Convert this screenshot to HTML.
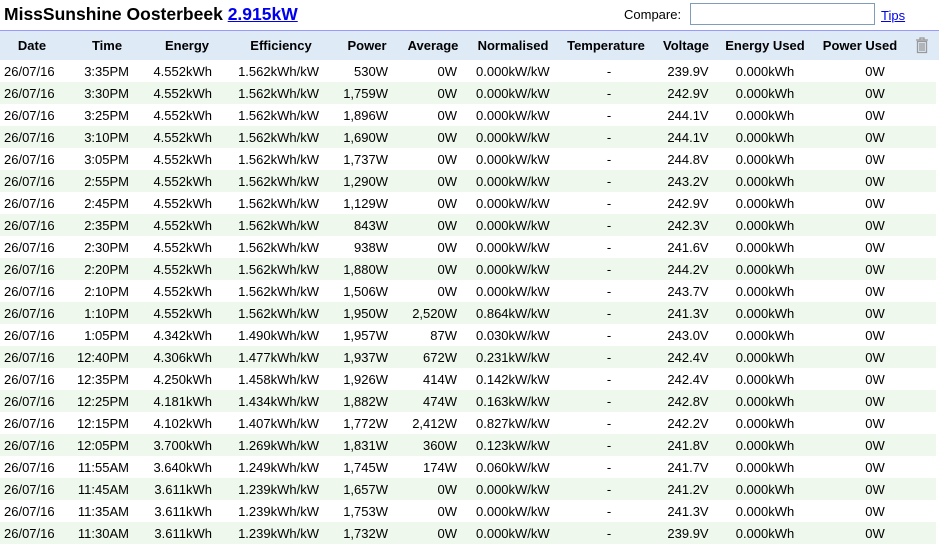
<!DOCTYPE html>
<html><head><meta charset="utf-8"><style>
body{margin:0;width:939px;height:540px;overflow:hidden;background:#fff;font-family:"Liberation Sans",Arial,sans-serif;font-size:13px;color:#000;position:relative}
.t{position:absolute;left:4px;top:4px;font-size:17.5px;font-weight:bold}
.t a{color:#00e;text-decoration:underline}
.cmp{position:absolute;left:624px;top:7px;font-size:13px}
.in{position:absolute;left:690px;top:3px;width:185px;height:22px;border:1px solid #7f9db9;box-sizing:border-box}
.tips{position:absolute;left:881px;top:8px;color:#00e;text-decoration:underline;font-size:13px}
.h{position:absolute;left:0;top:30px;width:939px;height:30px;background:#dfeaf7;border-top:1px solid #9999ff;box-sizing:border-box;font-weight:bold}
.r{position:absolute;left:0;width:936px;height:22px}
.r.g{background:#eef8ec}
.h span,.r span{position:absolute;top:7px;white-space:nowrap}
.r span{top:4px}
.c{width:120px;text-align:center}
</style></head><body>
<div class="t">MissSunshine Oosterbeek <a>2.915kW</a></div>
<div class="cmp">Compare:</div><div class="in"></div><a class="tips">Tips</a>
<div class="h">
<span class="c" style="left:-28px">Date</span>
<span class="c" style="left:47px">Time</span>
<span class="c" style="left:127px">Energy</span>
<span class="c" style="left:221px">Efficiency</span>
<span class="c" style="left:307px">Power</span>
<span class="c" style="left:373px">Average</span>
<span class="c" style="left:453px">Normalised</span>
<span class="c" style="left:546px">Temperature</span>
<span class="c" style="left:626px">Voltage</span>
<span class="c" style="left:705px">Energy Used</span>
<span class="c" style="left:800px">Power Used</span>
<svg style="position:absolute;left:915px;top:6px" width="14" height="17" viewBox="0 0 14 17"><path d="M1 3h12M5 3V1h4v2M2.5 4.5h9v11h-9z M5 6v8M7 6v8M9 6v8" stroke="#999" stroke-width="1.3" fill="none"/></svg>
</div>
<style>
.r span:nth-child(1){left:4px}
.r span:nth-child(2){left:9px;width:120px;text-align:right}
.r span:nth-child(3){left:92px;width:120px;text-align:right}
.r span:nth-child(4){left:199px;width:120px;text-align:right}
.r span:nth-child(5){left:268px;width:120px;text-align:right}
.r span:nth-child(6){left:337px;width:120px;text-align:right}
.r span:nth-child(7){left:476px}
.r span:nth-child(8){left:549px;width:120px;text-align:center}
.r span:nth-child(9){left:628px;width:120px;text-align:center}
.r span:nth-child(10){left:705px;width:120px;text-align:center}
.r span:nth-child(11){left:815px;width:120px;text-align:center}
</style>
<div class="r" style="top:60px"><span>26/07/16</span><span>3:35PM</span><span>4.552kWh</span><span>1.562kWh/kW</span><span>530W</span><span>0W</span><span>0.000kW/kW</span><span>-</span><span>239.9V</span><span>0.000kWh</span><span>0W</span></div>
<div class="r g" style="top:82px"><span>26/07/16</span><span>3:30PM</span><span>4.552kWh</span><span>1.562kWh/kW</span><span>1,759W</span><span>0W</span><span>0.000kW/kW</span><span>-</span><span>242.9V</span><span>0.000kWh</span><span>0W</span></div>
<div class="r" style="top:104px"><span>26/07/16</span><span>3:25PM</span><span>4.552kWh</span><span>1.562kWh/kW</span><span>1,896W</span><span>0W</span><span>0.000kW/kW</span><span>-</span><span>244.1V</span><span>0.000kWh</span><span>0W</span></div>
<div class="r g" style="top:126px"><span>26/07/16</span><span>3:10PM</span><span>4.552kWh</span><span>1.562kWh/kW</span><span>1,690W</span><span>0W</span><span>0.000kW/kW</span><span>-</span><span>244.1V</span><span>0.000kWh</span><span>0W</span></div>
<div class="r" style="top:148px"><span>26/07/16</span><span>3:05PM</span><span>4.552kWh</span><span>1.562kWh/kW</span><span>1,737W</span><span>0W</span><span>0.000kW/kW</span><span>-</span><span>244.8V</span><span>0.000kWh</span><span>0W</span></div>
<div class="r g" style="top:170px"><span>26/07/16</span><span>2:55PM</span><span>4.552kWh</span><span>1.562kWh/kW</span><span>1,290W</span><span>0W</span><span>0.000kW/kW</span><span>-</span><span>243.2V</span><span>0.000kWh</span><span>0W</span></div>
<div class="r" style="top:192px"><span>26/07/16</span><span>2:45PM</span><span>4.552kWh</span><span>1.562kWh/kW</span><span>1,129W</span><span>0W</span><span>0.000kW/kW</span><span>-</span><span>242.9V</span><span>0.000kWh</span><span>0W</span></div>
<div class="r g" style="top:214px"><span>26/07/16</span><span>2:35PM</span><span>4.552kWh</span><span>1.562kWh/kW</span><span>843W</span><span>0W</span><span>0.000kW/kW</span><span>-</span><span>242.3V</span><span>0.000kWh</span><span>0W</span></div>
<div class="r" style="top:236px"><span>26/07/16</span><span>2:30PM</span><span>4.552kWh</span><span>1.562kWh/kW</span><span>938W</span><span>0W</span><span>0.000kW/kW</span><span>-</span><span>241.6V</span><span>0.000kWh</span><span>0W</span></div>
<div class="r g" style="top:258px"><span>26/07/16</span><span>2:20PM</span><span>4.552kWh</span><span>1.562kWh/kW</span><span>1,880W</span><span>0W</span><span>0.000kW/kW</span><span>-</span><span>244.2V</span><span>0.000kWh</span><span>0W</span></div>
<div class="r" style="top:280px"><span>26/07/16</span><span>2:10PM</span><span>4.552kWh</span><span>1.562kWh/kW</span><span>1,506W</span><span>0W</span><span>0.000kW/kW</span><span>-</span><span>243.7V</span><span>0.000kWh</span><span>0W</span></div>
<div class="r g" style="top:302px"><span>26/07/16</span><span>1:10PM</span><span>4.552kWh</span><span>1.562kWh/kW</span><span>1,950W</span><span>2,520W</span><span>0.864kW/kW</span><span>-</span><span>241.3V</span><span>0.000kWh</span><span>0W</span></div>
<div class="r" style="top:324px"><span>26/07/16</span><span>1:05PM</span><span>4.342kWh</span><span>1.490kWh/kW</span><span>1,957W</span><span>87W</span><span>0.030kW/kW</span><span>-</span><span>243.0V</span><span>0.000kWh</span><span>0W</span></div>
<div class="r g" style="top:346px"><span>26/07/16</span><span>12:40PM</span><span>4.306kWh</span><span>1.477kWh/kW</span><span>1,937W</span><span>672W</span><span>0.231kW/kW</span><span>-</span><span>242.4V</span><span>0.000kWh</span><span>0W</span></div>
<div class="r" style="top:368px"><span>26/07/16</span><span>12:35PM</span><span>4.250kWh</span><span>1.458kWh/kW</span><span>1,926W</span><span>414W</span><span>0.142kW/kW</span><span>-</span><span>242.4V</span><span>0.000kWh</span><span>0W</span></div>
<div class="r g" style="top:390px"><span>26/07/16</span><span>12:25PM</span><span>4.181kWh</span><span>1.434kWh/kW</span><span>1,882W</span><span>474W</span><span>0.163kW/kW</span><span>-</span><span>242.8V</span><span>0.000kWh</span><span>0W</span></div>
<div class="r" style="top:412px"><span>26/07/16</span><span>12:15PM</span><span>4.102kWh</span><span>1.407kWh/kW</span><span>1,772W</span><span>2,412W</span><span>0.827kW/kW</span><span>-</span><span>242.2V</span><span>0.000kWh</span><span>0W</span></div>
<div class="r g" style="top:434px"><span>26/07/16</span><span>12:05PM</span><span>3.700kWh</span><span>1.269kWh/kW</span><span>1,831W</span><span>360W</span><span>0.123kW/kW</span><span>-</span><span>241.8V</span><span>0.000kWh</span><span>0W</span></div>
<div class="r" style="top:456px"><span>26/07/16</span><span>11:55AM</span><span>3.640kWh</span><span>1.249kWh/kW</span><span>1,745W</span><span>174W</span><span>0.060kW/kW</span><span>-</span><span>241.7V</span><span>0.000kWh</span><span>0W</span></div>
<div class="r g" style="top:478px"><span>26/07/16</span><span>11:45AM</span><span>3.611kWh</span><span>1.239kWh/kW</span><span>1,657W</span><span>0W</span><span>0.000kW/kW</span><span>-</span><span>241.2V</span><span>0.000kWh</span><span>0W</span></div>
<div class="r" style="top:500px"><span>26/07/16</span><span>11:35AM</span><span>3.611kWh</span><span>1.239kWh/kW</span><span>1,753W</span><span>0W</span><span>0.000kW/kW</span><span>-</span><span>241.3V</span><span>0.000kWh</span><span>0W</span></div>
<div class="r g" style="top:522px"><span>26/07/16</span><span>11:30AM</span><span>3.611kWh</span><span>1.239kWh/kW</span><span>1,732W</span><span>0W</span><span>0.000kW/kW</span><span>-</span><span>239.9V</span><span>0.000kWh</span><span>0W</span></div>
</body></html>
